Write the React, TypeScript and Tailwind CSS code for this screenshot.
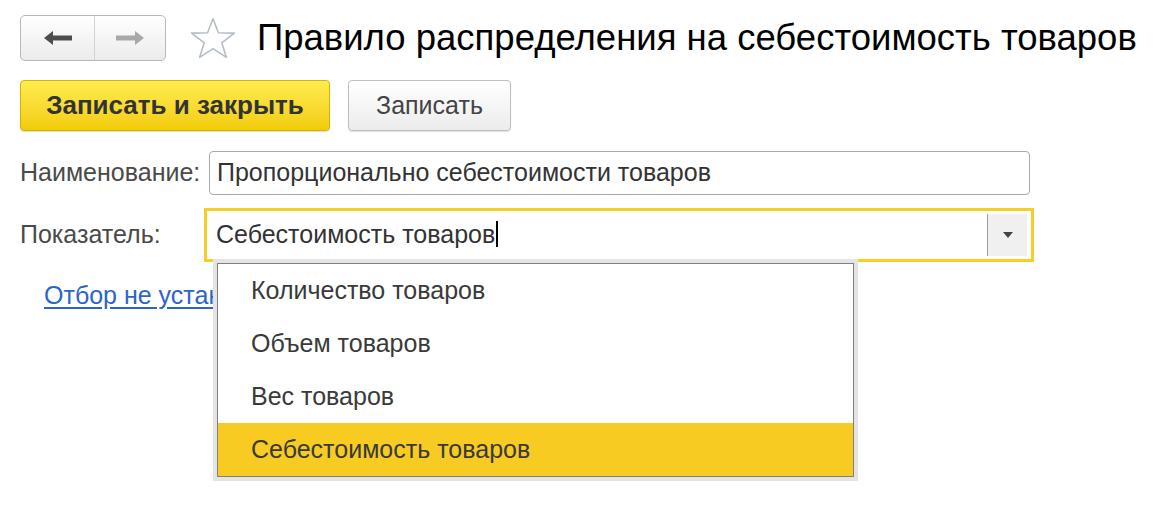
import React from 'react';

const items = ['Количество товаров', 'Объем товаров', 'Вес товаров', 'Себестоимость товаров'];

const ArrowLeft: React.FC<{ color: string }> = ({ color }) => (
  <svg width="28" height="14" viewBox="0 0 28 14">
    <path d="M0 7 L9 0 L9 4.5 L28 4.5 L28 9.5 L9 9.5 L9 14 Z" fill={color} />
  </svg>
);

const ArrowRight: React.FC<{ color: string }> = ({ color }) => (
  <svg width="28" height="14" viewBox="0 0 28 14">
    <path d="M28 7 L19 0 L19 4.5 L0 4.5 L0 9.5 L19 9.5 L19 14 Z" fill={color} />
  </svg>
);

const Star = () => (
  <svg width="48" height="42" viewBox="0 0 46 40">
    <path
      d="M23 1.5 L28.2 15 L43.5 15.3 L31.4 24.6 L35.8 38.5 L23 30.2 L10.2 38.5 L14.6 24.6 L2.5 15.3 L17.8 15 Z"
      fill="none"
      stroke="#b4bcc6"
      strokeWidth="1.5"
      strokeLinejoin="round"
    />
  </svg>
);

export default function App() {
  return (
    <div className="relative w-[1175px] h-[530px] bg-white overflow-hidden font-['Liberation_Sans',Arial,sans-serif]">
      {/* header */}
      <div className="flex items-center pl-[20px] pt-[15px]">
        <div className="flex h-[46px] w-[146px] rounded-[5px] border border-[#b8b8b8] bg-gradient-to-b from-white to-[#ebebeb]">
          <div className="flex w-[74px] items-center justify-center border-r border-[#d2d2d2]">
            <ArrowLeft color="#4d4d4d" />
          </div>
          <div className="flex flex-1 items-center justify-center">
            <ArrowRight color="#a8a8a8" />
          </div>
        </div>
        <div className="ml-[23px]">
          <Star />
        </div>
        <h1 className="ml-[20px] text-[36.5px] leading-none text-black">
          Правило распределения на себестоимость товаров
        </h1>
      </div>

      {/* command bar */}
      <div className="flex gap-[18px] pl-[20px] pt-[19px]">
        <button className="h-[51px] w-[310px] rounded-[4px] border border-[#d4b400] bg-gradient-to-b from-[#ffec4d] to-[#f2cc00] text-[26px] font-bold text-[#333] shadow-[0_1px_1px_rgba(0,0,0,0.15)]">
          Записать и закрыть
        </button>
        <button className="h-[51px] w-[163px] rounded-[4px] border border-[#bdbdbd] bg-gradient-to-b from-white to-[#ececec] text-[25px] text-[#444] shadow-[0_1px_1px_rgba(0,0,0,0.12)]">
          Записать
        </button>
      </div>

      {/* form */}
      <div className="flex flex-col pl-[20px] pt-[20px]">
        <div className="flex items-center">
          <span className="w-[189px] text-[25px] text-[#4a4a4a]">Наименование:</span>
          <div className="flex h-[44px] w-[821px] items-center rounded-[4px] border border-[#a9a9a9] bg-white px-[7px] text-[25px] text-[#333]">
            Пропорционально себестоимости товаров
          </div>
        </div>
        <div className="mt-[13px] flex items-center">
          <span className="w-[184px] text-[25px] text-[#4a4a4a]">Показатель:</span>
          <div className="flex h-[54px] w-[830px] items-center border-[3px] border-[#f7cd2a] bg-white pl-[9px] pr-[4px]">
            <span className="flex-1 text-[25px] text-[#333]">
              Себестоимость товаров<span className="ml-[1px] inline-block h-[26px] w-[1.5px] translate-y-[4px] bg-black" />
            </span>
            <div className="flex h-[42px] w-[40px] items-center justify-center border-l border-[#9a9a9a] bg-[#f0f0f0]">
              <svg width="10" height="6" viewBox="0 0 10 6">
                <path d="M0 0 H10 L5 6 Z" fill="#444" />
              </svg>
            </div>
          </div>
        </div>
        <div className="ml-[24px] mt-[15px] w-[169px] overflow-hidden whitespace-nowrap">
          <a className="text-[25px] text-[#2c64c8] underline underline-offset-[3px]">Отбор не установлен</a>
        </div>
      </div>

      {/* dropdown popup */}
      <div className="absolute left-[213px] top-[259px] w-[645px] border-[4px] border-[#e4e4e4]">
        <div className="border border-[#808080] bg-white">
          {items.map((item, i) => (
            <div
              key={item}
              className={`flex h-[53px] items-center pl-[33px] text-[25px] text-[#3a3a3a] ${
                i === items.length - 1 ? 'bg-[#f8cb22]' : ''
              }`}
            >
              {item}
            </div>
          ))}
        </div>
      </div>
    </div>
  );
}
